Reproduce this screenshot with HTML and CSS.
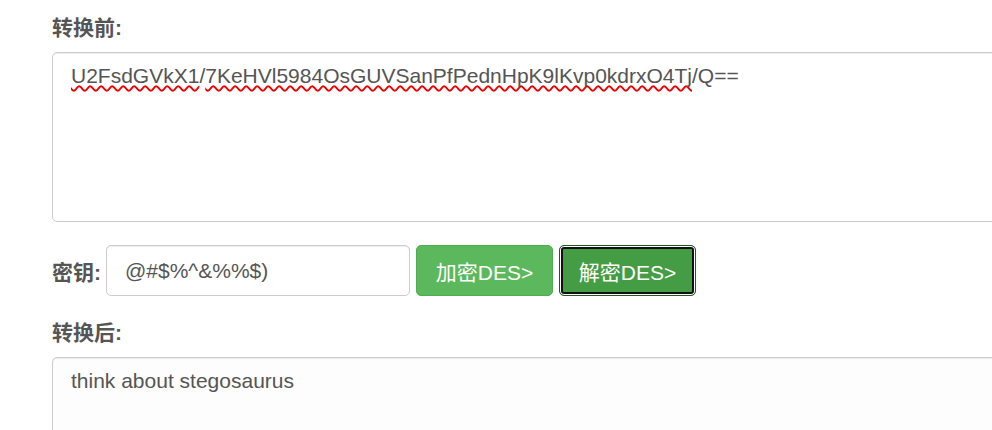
FILE: index.html
```html
<!DOCTYPE html>
<html lang="zh-CN">
<head>
<meta charset="utf-8">
<title>DES 加密解密</title>
<link rel="stylesheet" href="styles.css">
</head>
<body>
<div class="page">
  <div class="field-label">转换前:</div>
  <div class="area area-input" role="textbox" aria-multiline="true"><span class="typo">U2FsdGVkX1</span>/<span class="typo">7KeHVl5984OsGUVSanPfPednHpK9lKvp0kdrxO4Tj</span>/Q==</div>
  <div class="key-row">
    <label class="key-label" for="key">密钥:</label>
    <input id="key" class="key-input" type="text" value="@#$%^&amp;%%$)">
    <button class="btn">加密DES&gt;</button>
    <button class="btn btn-focus">解密DES&gt;</button>
  </div>
  <div class="field-label field-label-2">转换后:</div>
  <div class="area area-output" role="textbox" aria-multiline="true">think about stegosaurus</div>
</div>
</body>
</html>
```
FILE: styles.css
```css
html, body {
  margin: 0;
  padding: 0;
  overflow: hidden;
  background: #fff;
}
body {
  font-family: "Liberation Sans", Arial, "Noto Sans CJK SC", sans-serif;
  color: #555;
}
.page {
  width: 1100px;
  padding: 14px 0 0 52px;
  display: flex;
  flex-direction: column;
  align-items: flex-start;
}
.field-label {
  font-family: "Liberation Sans", "Noto Sans CJK SC", sans-serif;
  font-weight: bold;
  font-size: 21px;
  line-height: 28px;
  color: #555;
  margin-bottom: 10px;
}
.field-label-2 {
  margin-top: 23px;
}
.area {
  box-sizing: border-box;
  width: 1060px;
  height: 170px;
  border: 1px solid #ccc;
  border-radius: 5px;
  box-shadow: inset 0 1px 1px rgba(0,0,0,0.075);
  padding: 9px 18px;
  font-size: 21px;
  line-height: 28px;
  color: #555;
  background: #fff;
}
.area-output {
  background: #fdfdfd;
}
.typo {
  text-decoration: underline wavy #e00;
  text-decoration-thickness: 1.5px;
  text-underline-offset: 2px;
  text-decoration-skip-ink: none;
}
.key-row {
  margin-top: 23px;
  display: flex;
  align-items: center;
  gap: 6px;
}
.key-label {
  font-family: "Liberation Sans", "Noto Sans CJK SC", sans-serif;
  font-weight: bold;
  font-size: 21px;
  color: #555;
  width: 48px;
  flex-shrink: 0;
  white-space: nowrap;
}
.key-input {
  box-sizing: border-box;
  width: 304px;
  height: 51px;
  border: 1px solid #ccc;
  border-radius: 5px;
  box-shadow: inset 0 1px 1px rgba(0,0,0,0.075);
  padding: 0 18px;
  font-family: "Liberation Sans", Arial, sans-serif;
  font-size: 21px;
  color: #555;
  outline: none;
}
.btn {
  box-sizing: border-box;
  width: 137px;
  height: 51px;
  border: 1px solid #4cae4c;
  border-radius: 5px;
  background: #5cb85c;
  color: #fff;
  font-family: "Liberation Sans", Arial, "Noto Sans CJK SC", sans-serif;
  font-size: 21px;
  padding: 0;
  cursor: pointer;
}
.btn-focus {
  background: #449d44;
  border-color: #255625;
  box-shadow: inset 0 0 0 1px #fff, inset 0 0 0 3px #111;
}
```
